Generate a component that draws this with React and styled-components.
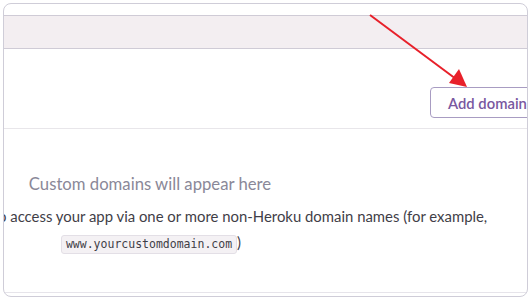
import React from 'react';
import styled, { createGlobalStyle } from 'styled-components';

const GlobalStyle = createGlobalStyle`
  html, body {
    margin: 0;
    padding: 0;
    background: #ffffff;
    overflow: hidden;
  }
  body {
    font-family: Lato, "Open Sans", "Liberation Sans", sans-serif;
  }
`;

const Page = styled.div`
  position: relative;
  width: 530px;
  height: 300px;
  padding: 3px 2px 3px 3px;
  box-sizing: border-box;
`;

const Frame = styled.div`
  height: 294px;
  box-sizing: border-box;
  border: 1px solid #cfcdd8;
  border-radius: 8px;
  overflow: hidden;
  display: flex;
  flex-direction: column;
  background: #fff;
`;

const TopStrip = styled.div`
  height: 11px;
  border-bottom: 1px solid #cfcbd6;
`;

const Band = styled.div`
  height: 32px;
  background: #f3eef1;
  border-bottom: 1px solid #cfcbd6;
`;

const Toolbar = styled.div`
  height: 80px;
  box-sizing: border-box;
  border-bottom: 1px solid #e8e6ea;
  display: flex;
  align-items: flex-start;
  justify-content: flex-end;
  padding-top: 38px;
`;

const Button = styled.button`
  height: 31px;
  width: 118px;
  margin-right: -21px;
  box-sizing: border-box;
  border: 1px solid #a89cc2;
  border-radius: 4px;
  background: #fff;
  color: #79589f;
  font-family: Lato, "Open Sans", sans-serif;
  font-size: 14.8px;
  font-weight: 600;
  text-align: left;
  padding: 0 0 0 17px;
  white-space: nowrap;
`;

const Body = styled.div`
  flex: 1;
  border-bottom: 1px solid #e6e4ea;
  margin-bottom: 3px;
  padding-top: 45px;
`;

const Title = styled.div`
  width: 292px;
  text-align: center;
  font-size: 16.7px;
  line-height: 20px;
  color: #8a8898;
`;

const Text = styled.div`
  margin-top: ${p => p.$gap || 12}px;
  margin-left: ${p => p.$offset || 0}px;
  width: ${p => p.$width || 'auto'};
  text-align: ${p => p.$align || 'left'};
  white-space: nowrap;
  font-size: 14.9px;
  line-height: 20px;
  color: #3f3e47;
`;

const Code = styled.code`
  display: inline-block;
  font-family: "DejaVu Sans Mono", "Liberation Mono", monospace;
  font-size: 11.5px;
  line-height: 15px;
  padding: 1px 4px;
  background: #f4f1f4;
  border: 1px solid #e3dfe6;
  border-radius: 3px;
  color: #3f3e47;
`;

const Arrow = styled.svg`
  position: absolute;
  left: 0;
  top: 0;
  pointer-events: none;
`;

export default function App() {
  return (
    <>
      <GlobalStyle />
      <Page>
        <Frame>
          <TopStrip />
          <Band />
          <Toolbar>
            <Button>Add domain</Button>
          </Toolbar>
          <Body>
            <Title>Custom domains will appear here</Title>
            <Text $offset={-13}>
              To access your app via one or more non-Heroku domain names (for example,
            </Text>
            <Text $width="294px" $align="center" $gap={6}>
              <Code>www.yourcustomdomain.com</Code>)
            </Text>
          </Body>
        </Frame>
        <Arrow width="530" height="300" viewBox="0 0 530 300">
          <line x1="370" y1="15" x2="456" y2="79" stroke="#e8202a" strokeWidth="2" />
          <polygon points="467,87 449,83 459,69" fill="#e8202a" />
        </Arrow>
      </Page>
    </>
  );
}
